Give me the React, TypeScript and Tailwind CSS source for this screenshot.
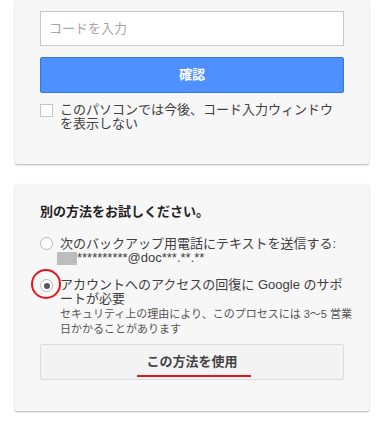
import React, { useState } from 'react';

const FONT = { fontFamily: '"Liberation Sans", "Noto Sans CJK JP", sans-serif' };

export default function App() {
  const [method, setMethod] = useState<'sms' | 'support'>('support');

  return (
    <div className="min-h-[426px] w-[385px] bg-white" style={FONT}>
      {/* コード入力カード */}
      <div className="mx-[15px] w-[354px] rounded-b-[2px] bg-[#f7f7f7] px-[25px] pt-[11px] pb-[33px] shadow-[0_1px_2px_rgba(0,0,0,0.3)]">
        <input
          type="text"
          placeholder="コードを入力"
          className="block h-[35px] w-[304px] border border-[#c8c8c8] bg-white px-[8px] text-[13px] text-[#333] placeholder:text-[#a6a6a6] outline-none"
        />
        <button className="mt-[11px] flex h-[36px] w-[304px] items-center justify-center rounded-[2px] border border-[#3079ed] bg-[#4d90fe] text-[13px] font-bold text-white">
          確認
        </button>
        <label className="mt-[10px] flex items-start gap-[7px]">
          <span className="mt-[1px] h-[13px] w-[13px] shrink-0 border border-[#c6c6c6] bg-white" />
          <span className="text-[13px] leading-[14px] text-[#404040]">
            このパソコンでは今後、コード入力ウィンドウ
            <br />
            を表示しない
          </span>
        </label>
      </div>

      {/* 別の方法カード */}
      <div className="mx-[15px] mt-[20px] w-[354px] rounded-[2px] bg-[#f7f7f7] px-[25px] pt-[21px] pb-[31px] shadow-[0_1px_2px_rgba(0,0,0,0.3)]">
        <h2 className="text-[13px] leading-[14px] font-bold text-[#222]">別の方法をお試しください。</h2>

        <div className="mt-[18px] flex items-start gap-[7px]" onClick={() => setMethod('sms')}>
          <span className="flex h-[13px] w-[13px] shrink-0 items-center justify-center rounded-full border border-[#b8b8b8] bg-white">
            {method === 'sms' && <span className="h-[5px] w-[5px] rounded-full bg-[#555]" />}
          </span>
          <div className="text-[13px] leading-[14px] text-[#404040]">
            <div>次のバックアップ用電話にテキストを送信する:</div>
            <div className="-ml-[3px] flex items-center">
              <span className="inline-block h-[13px] w-[20px] bg-[#bdbdbd]" />
              <span>**********@doc***.**.**</span>
            </div>
          </div>
        </div>

        <div className="mt-[13px] flex items-start gap-[7px]" onClick={() => setMethod('support')}>
          <span className="relative mt-[1px] flex h-[13px] w-[13px] shrink-0 items-center justify-center rounded-full border border-[#b8b8b8] bg-white">
            {method === 'support' && <span className="h-[6px] w-[6px] rounded-full bg-[#555]" />}
            <span className="absolute -top-[11px] -left-[10px] h-[30px] w-[30px] rounded-full border-2 border-[#e8141c]" />
          </span>
          <div>
            <div className="text-[13px] leading-[14px] text-[#404040]">
              アカウントへのアクセスの回復に Google のサポ
              <br />
              ートが必要
            </div>
            <div className="mt-[1px] whitespace-nowrap text-[11px] leading-[15px] text-[#555]">
              セキュリティ上の理由により、このプロセスには 3～5 営業
              <br />
              日かかることがあります
            </div>
          </div>
        </div>

        <button className="mt-[7px] flex h-[36px] w-[304px] items-center justify-center rounded-[2px] border border-[#dcdcdc] bg-[#f3f3f3] text-[13px] font-bold text-[#444]">
          <span className="relative">
            この方法を使用
            <span className="absolute -bottom-[5px] -left-[9px] -right-[13px] h-[2px] bg-[#e8141c]" />
          </span>
        </button>
      </div>
    </div>
  );
}
